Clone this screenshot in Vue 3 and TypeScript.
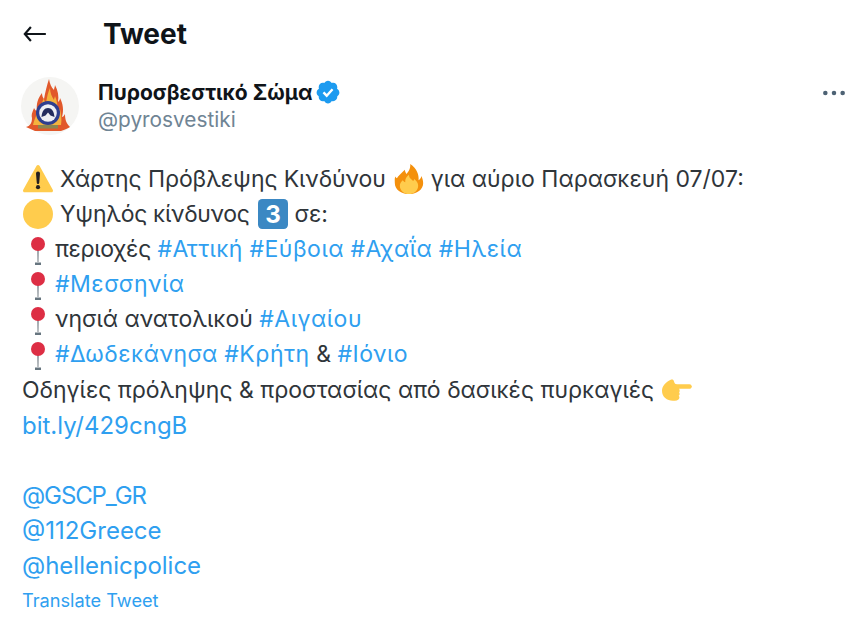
<script setup lang="ts">
</script>

<template>
  <div class="page">
    <header class="top">
      <svg class="back" viewBox="0 0 24 24"><path d="M8.200 5.500 2.600 12l5.600 6.500M3 12h19" fill="none" stroke="#0f1419" stroke-width="2"/></svg>
      <h1>Tweet</h1>
    </header>
    <section class="author">
      <svg class="avatar" viewBox="0 0 58 58">
        <circle cx="29" cy="29" r="29" fill="#f5f5f3"/>
        <path d="M5 50c4-1 6-4 6-9-1-4 1-7 2-10 1 2 2 3 3 3-1-7 1-13 5-18 0 3 1 5 2 6 1-6 3-14 5-20 1 5 2 8 5 11 0-2 1-3 1-5 3 6 4 11 3 17 1-1 2-2 2-4 3 6 4 12 2 19 1 0 2-1 3-3 0 5 1 9 5 13-2 1-5 3-9 4H14C11 53 8 51 5 50z" fill="#e1582b"/>
        <path d="M12 48c1-5 3-9 4-11 1 1 2 1 3 0 0-7 2-12 4-16 0 3 1 4 2 5 1-6 2-11 4-15 0 5 2 9 4 12 0-2 1-3 1-4 2 5 3 10 2 15 1 0 2-1 3-2 1 5 2 10 1 16z" fill="#f4b33e"/>
        <path d="M19 42c0-6 3-12 7-17 0 3 2 4 4 6 1-1 2-2 2-3 2 4 3 9 2 14z" fill="#fbe27a"/>
        <circle cx="27" cy="36" r="12" fill="#2f3f8f"/>
        <circle cx="27" cy="36" r="8.800" fill="#eeeff4"/>
        <path d="M20.500 40c.5-6 3-9 6.500-9s6 3 6.500 9l-4-1.500L27 35.500l-2.500 3z" fill="#242c5e"/>
        <path d="M17 48h20v3.500H17z" fill="#8d8650"/>
      </svg>
      <div class="who">
        <div class="name-row">
          <span class="name">Πυροσβεστικό Σώμα</span>
          <svg class="badge" viewBox="0 0 24 24"><path d="M22.500 12.500c0-1.580-.875-2.950-2.148-3.600.154-.435.238-.905.238-1.400 0-2.210-1.710-3.998-3.818-3.998-.47 0-.92.084-1.336.25C14.818 2.415 13.510 1.500 12 1.500s-2.816.917-3.437 2.250c-.415-.165-.866-.25-1.336-.25-2.110 0-3.818 1.790-3.818 4 0 .494.083.964.237 1.400-1.272.65-2.147 2.018-2.147 3.600 0 1.495.782 2.798 1.942 3.486-.02.17-.032.34-.032.514 0 2.210 1.708 4 3.818 4 .47 0 .92-.086 1.335-.25.62 1.334 1.926 2.250 3.437 2.250 1.512 0 2.818-.916 3.437-2.250.415.163.865.248 1.336.248 2.110 0 3.818-1.790 3.818-4 0-.174-.012-.344-.033-.513 1.158-.687 1.943-1.990 1.943-3.484z" fill="#1d9bf0"/><path d="m7.800 12.400 3 3 5.400-6" fill="none" stroke="#fff" stroke-width="2.200"/></svg>
        </div>
        <div class="handle">@pyrosvestiki</div>
      </div>
      <svg class="more" viewBox="0 0 24 24"><circle cx="4" cy="12" r="2.100"/><circle cx="12" cy="12" r="2.100"/><circle cx="20" cy="12" r="2.100"/></svg>
    </section>
    <article class="body">
      <p>
        <svg class="emoji first" viewBox="0 0 36 36"><path d="M2 34h32a2 2 0 0 0 1.700-3L19.800 2.200a2 2 0 0 0-3.500 0L.3 31a2 2 0 0 0 1.700 3z" fill="#ffcc4d"/><path d="M15.600 11.500a2.400 2.400 0 0 1 4.800 0l-.9 11a1.500 1.500 0 0 1-3 0z" fill="#231f20"/><circle cx="18" cy="27.800" r="2.500" fill="#231f20"/></svg>
        <span class="snug">Χάρτης Πρόβλεψης Κινδύνου</span>
        <svg class="emoji" viewBox="0 0 36 36"><path d="M35 23c0-3-.8-6-2.200-8.500-.3 2.500-1.600 4.200-3.300 5 .6-6-1.800-14-10-19.500.5 5.500-2 9-4.500 12-1-1.500-1.800-3-2-5C8 11.500 5 15 3.500 17 2.500 16.500 2 16 1.500 15 .5 17.500 1 21 1 23c0 7.500 7.600 13 17 13s17-5.500 17-13z" fill="#f4900c"/><path d="M29 26c0 5.500-5 10-11 10S7 31.500 7 26c0-3 2-5 3.500-6.500 1 1.300 1.800 2 3 2.500-.5-3.500 1.500-7 4.500-9 0 4 2.500 5 5 7.500.8-.8 1.200-1.500 1.300-2.500C27 20 29 23 29 26z" fill="#ffcc4d"/></svg>
        <span>για αύριο Παρασκευή 07/07:</span>
      </p>
      <p>
        <svg class="emoji first" viewBox="0 0 36 36"><circle cx="18" cy="18" r="18" fill="#ffcc4d"/></svg>
        <span class="tight">Υψηλός κίνδυνος</span>
        <svg class="emoji" viewBox="0 0 36 36"><rect width="36" height="36" rx="5" fill="#3b88c3"/><text x="18" y="29" class="keycap">3</text></svg>
        <span>σε:</span>
      </p>
      <p>
        <svg class="pin" viewBox="0 0 16 28"><path d="M7 13h2l-.3 12H7.300z" fill="#a0a6ab"/><path d="M5 25.500h6V28H5z" fill="#66757f"/><circle cx="8" cy="7" r="7" fill="#dd2e44"/></svg><span class="tight">περιοχές</span> <span class="link">#Αττική</span> <span class="link">#Εύβοια</span> <span class="link">#Αχαΐα</span> <span class="link">#Ηλεία</span>
      </p>
      <p>
        <svg class="pin" viewBox="0 0 16 28"><path d="M7 13h2l-.3 12H7.300z" fill="#a0a6ab"/><path d="M5 25.500h6V28H5z" fill="#66757f"/><circle cx="8" cy="7" r="7" fill="#dd2e44"/></svg><span class="link">#Μεσσηνία</span>
      </p>
      <p>
        <svg class="pin" viewBox="0 0 16 28"><path d="M7 13h2l-.3 12H7.300z" fill="#a0a6ab"/><path d="M5 25.500h6V28H5z" fill="#66757f"/><circle cx="8" cy="7" r="7" fill="#dd2e44"/></svg>νησιά ανατολικού <span class="link">#Αιγαίου</span>
      </p>
      <p>
        <svg class="pin" viewBox="0 0 16 28"><path d="M7 13h2l-.3 12H7.300z" fill="#a0a6ab"/><path d="M5 25.500h6V28H5z" fill="#66757f"/><circle cx="8" cy="7" r="7" fill="#dd2e44"/></svg><span class="link">#Δωδεκάνησα</span> <span class="link">#Κρήτη</span> &amp; <span class="link">#Ιόνιο</span>
      </p>
      <p>
        <span>Οδηγίες πρόληψης &amp; προστασίας από δασικές πυρκαγιές</span>
        <svg class="emoji hand" viewBox="0 0 36 26"><path d="M35.500 8.500C35.500 7 34.500 6 33 6H18c-2 0-3-1-3.500-3C14 .5 12 0 10 1 5 3.500 0 8 0 14c0 7.500 6 12 13 12 3.500 0 6.500-.5 7.500-2.500.8-1.300.5-2.500-.5-3.500 1.500-1 1.500-3 .5-4 1-1 1-3 0-4.500h13c1.500 0 2.500-2 2.500-3.500z" fill="#ffcc4d"/></svg>
      </p>
      <p class="latin"><span class="link">bit.ly/429cngB</span></p>
      <p>&nbsp;</p>
      <p class="latin"><span class="link gscp">@GSCP_GR</span></p>
      <p class="latin"><span class="link">@112Greece</span></p>
      <p class="latin"><span class="link">@hellenicpolice</span></p>
    </article>
    <div class="translate">Translate Tweet</div>
  </div>
</template>

<style scoped>
.page {
  width: 865px;
  height: 628px;
  box-sizing: border-box;
  padding: 0 22px;
  overflow: hidden;
  background: #fff;
  color: #0f1419;
  font-family: Inter, "Open Sans", sans-serif;
}
.top {
  display: flex;
  align-items: center;
  height: 66px;
  padding-top: 1px;
}
.back {
  width: 26px;
  height: 26px;
  margin-right: 55px;
}
h1 {
  margin: 0;
  font-size: 28px;
  font-weight: 700;
  line-height: 34px;
}
.author {
  display: flex;
  align-items: center;
  height: 58px;
  margin-top: 10px;
}
.avatar {
  width: 58px;
  height: 58px;
  margin: 0 19px 0 -1px;
}
.who {
  flex: 1;
}
.name-row {
  display: flex;
  align-items: center;
  height: 28px;
}
.name {
  font-size: 21px;
  font-weight: 700;
}
.badge {
  width: 26px;
  height: 26px;
  margin-left: 3px;
}
.handle {
  color: #6f8494;
  font-size: 20.800px;
  line-height: 28px;
}
.more {
  align-self: flex-start;
  width: 26px;
  height: 26px;
  margin: 3px -4px 0 0;
  fill: #4d6274;
}
.body {
  margin-top: 27px;
  color: #2f353a;
  font-size: 23px;
  line-height: 35.100px;
}
p {
  margin: 0;
  height: 35.100px;
  white-space: nowrap;
}
.latin {
  font-size: 24px;
}
.link {
  color: #2f9ff0;
  letter-spacing: .5px;
}
.latin .link {
  letter-spacing: 0;
}
.latin .gscp {
  letter-spacing: -1.100px;
}
.snug {
  letter-spacing: -.1px;
}
.tight {
  letter-spacing: -.3px;
}
.emoji {
  width: 30px;
  height: 30px;
  margin: 0 7px 0 8px;
  vertical-align: -7px;
}
.first {
  margin-left: 1px;
}
.hand {
  height: 22px;
  vertical-align: -3px;
}
.pin {
  width: 16px;
  height: 28px;
  margin: 0 9px 0 8px;
  vertical-align: -8px;
}
.keycap {
  fill: #fff;
  font-size: 29px;
  font-weight: 700;
  text-anchor: middle;
}
.translate {
  color: #2f9ff0;
  font-size: 18.200px;
  line-height: 24px;
  margin-top: 5px;
}
</style>
